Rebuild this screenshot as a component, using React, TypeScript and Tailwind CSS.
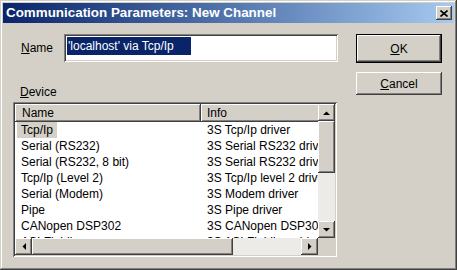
const rows = [
    { name: "Tcp/Ip", info: "3S Tcp/Ip driver" },
    { name: "Serial (RS232)", info: "3S Serial RS232 driver" },
    { name: "Serial (RS232, 8 bit)", info: "3S Serial RS232 driver" },
    { name: "Tcp/Ip (Level 2)", info: "3S Tcp/Ip level 2 driver" },
    { name: "Serial (Modem)", info: "3S Modem driver" },
    { name: "Pipe", info: "3S Pipe driver" },
    { name: "CANopen DSP302", info: "3S CANopen DSP302 driver" },
    { name: "ASI Fieldbus", info: "3S ASI Fieldbus driver" },
]

// raised 3d look (classic windows)
const raised = "bg-[#d4d0c8] shadow-[inset_-1px_-1px_#404040,inset_1px_1px_#ffffff,inset_-2px_-2px_#808080,inset_2px_2px_#d4d0c8]"
const sunken = "shadow-[inset_1px_1px_#808080,inset_-1px_-1px_#ffffff,inset_2px_2px_#404040,inset_-2px_-2px_#d4d0c8]"

function Arrow(props: { dir: "up" | "down" | "left" | "right" }) {
    const pts = {
        up: "0,4 7,4 3.5,0.5",
        down: "0,0 7,0 3.5,3.5",
        left: "4,0 4,7 0.5,3.5",
        right: "0,0 0,7 3.5,3.5",
    }[props.dir]
    const vertical = props.dir === "up" || props.dir === "down"
    return (
        <svg width={vertical ? 7 : 4} height={vertical ? 4 : 7} viewBox={vertical ? "0 0 7 4" : "0 0 4 7"}>
            <polygon points={pts} fill="#000" />
        </svg>
    )
}

function ScrollBtn(props: { dir: "up" | "down" | "left" | "right" }) {
    return (
        <div className={`${raised} w-[17px] h-[17px] shrink-0 flex items-center justify-center`}>
            <Arrow dir={props.dir} />
        </div>
    )
}

export default function App() {
    return (
        <div className="w-[457px] h-[270px] bg-[#d4d0c8] p-[3px] flex flex-col font-['Liberation_Sans',Arial,sans-serif] text-[12px] text-black shadow-[inset_-1px_-1px_#404040,inset_1px_1px_#d4d0c8,inset_-2px_-2px_#808080,inset_2px_2px_#ffffff]">
            {/* title bar */}
            <div className="h-[20px] bg-linear-to-r from-[#0a246a] to-[#a6caf0] flex items-center justify-between pl-[3px] pr-[2px]">
                <span className="text-white font-bold text-[13.4px] leading-none">Communication Parameters: New Channel</span>
                <div className={`${raised} w-[16px] h-[14px] flex items-center justify-center`}>
                    <svg width="8" height="7" viewBox="0 0 8 7">
                        <path d="M0.5 0.5 L7.5 6.5 M7.5 0.5 L0.5 6.5" stroke="#000" strokeWidth="1.6" />
                    </svg>
                </div>
            </div>

            <div className="flex pl-[10px] pt-[11px]">
                {/* left side */}
                <div className="w-[325px] flex flex-col">
                    <div className="flex items-center h-[28px]">
                        <span className="w-[51px] pl-[8px]"><u>N</u>ame</span>
                        <div className={`${sunken} bg-white w-[274px] h-[28px] pl-[3px] pt-[3px]`}>
                            <span className="bg-[#0a246a] text-white leading-[18px] inline-block px-[1px] whitespace-pre">'localhost' via Tcp/Ip     </span>
                        </div>
                    </div>

                    <span className="pl-[7px] mt-[23px] leading-[14px]"><u>D</u>evice</span>

                    <div className={`${sunken} bg-white mt-[3px] w-[324px] h-[155px] p-[2px] flex flex-col`}>
                        <div className="flex flex-1 min-h-0">
                            <div className="flex-1 min-w-0 overflow-hidden flex flex-col">
                                <div className="flex h-[18px] shrink-0">
                                    <div className={`${raised} w-[186px] shrink-0 pl-[7px] leading-[18px]`}>Name</div>
                                    <div className={`${raised} w-[200px] shrink-0 pl-[6px] leading-[18px]`}>Info</div>
                                </div>
                                {rows.map((r, i) => (
                                    <div key={r.name} className="flex h-[16px] shrink-0 leading-[16px] whitespace-nowrap">
                                        <div className="w-[186px] shrink-0 pl-[2px]">
                                            <span className={`px-[4px] inline-block ${i === 0 ? "bg-[#d4d0c8]" : ""}`}>{r.name}</span>
                                        </div>
                                        <div className="pl-[6px]">{r.info}</div>
                                    </div>
                                ))}
                            </div>
                            {/* vertical scrollbar */}
                            <div className="w-[17px] flex flex-col bg-[#ecebe7]">
                                <ScrollBtn dir="up" />
                                <div className={`${raised} h-[52px] shrink-0`}></div>
                                <div className="flex-1"></div>
                                <ScrollBtn dir="down" />
                            </div>
                        </div>
                        {/* horizontal scrollbar */}
                        <div className="flex h-[17px] shrink-0">
                            <div className="flex flex-1 bg-[#ecebe7]">
                                <ScrollBtn dir="left" />
                                <div className={`${raised} w-[201px] shrink-0`}></div>
                                <div className="flex-1"></div>
                                <ScrollBtn dir="right" />
                            </div>
                            <div className="w-[17px] bg-[#d4d0c8]"></div>
                        </div>
                    </div>
                </div>

                {/* buttons */}
                <div className="ml-[18px] w-[86px] flex flex-col gap-[9px]">
                    <div className="border border-black h-[29px] flex">
                        <div className={`${raised} flex-1 flex items-center justify-center`}>
                            <span><u>O</u>K</span>
                        </div>
                    </div>
                    <div className={`${raised} h-[23px] flex items-center justify-center`}>
                        <span><u>C</u>ancel</span>
                    </div>
                </div>
            </div>
        </div>
    )
}
